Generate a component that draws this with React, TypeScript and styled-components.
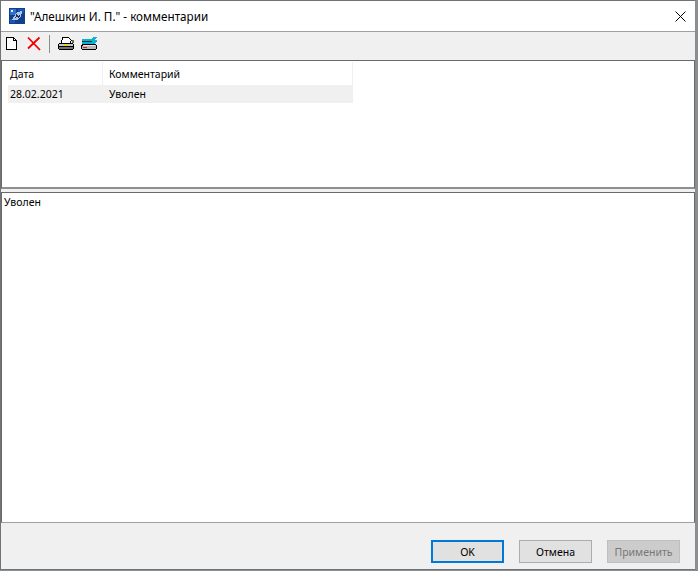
import * as React from "react";
import styled, { createGlobalStyle } from "styled-components";

const GlobalStyle = createGlobalStyle`
	html, body {
		margin: 0;
		padding: 0;
		background: #8a8f94;
	}
	#root {
		width: 698px;
		height: 571px;
		overflow: hidden;
	}
`;

function AppIcon() {
	return (
		<svg width="16" height="16" viewBox="0 0 16 16" shapeRendering="crispEdges">
			<rect width="16" height="16" fill="#12408f" />
			<rect x="1" y="1" width="6" height="6" fill="#2f6fd0" />
			<rect x="9" y="1" width="6" height="4" fill="#1c56b4" />
			<rect x="1" y="11" width="5" height="4" fill="#1c56b4" />
			<path d="M3 12 L7 5 L9 4 L13 3 L12 9 L8 12 Z" fill="#a9c6ec" />
			<path d="M6 10 L8 5 L9 9 L12 5 L10 11 L8 8 Z" fill="#26324f" />
			<rect x="2" y="2" width="2" height="2" fill="#e4eefb" />
		</svg>
	);
}

function NewIcon() {
	return (
		<svg width="16" height="16" viewBox="0 0 16 16" shapeRendering="crispEdges">
			<path d="M2.5 1.5 H9.5 L12.5 4.5 V13.5 H2.5 Z" fill="#fff" stroke="#000" />
			<path d="M9.5 1.5 V4.5 H12.5" fill="none" stroke="#000" />
		</svg>
	);
}

function DeleteIcon() {
	return (
		<svg width="16" height="16" viewBox="0 0 16 16">
			<path d="M2 1.5 L14 14 M13.5 1.5 L2 12.5" stroke="#f00000" strokeWidth="1.8" fill="none" />
		</svg>
	);
}

function PrintIcon() {
	return (
		<svg width="18" height="16" viewBox="0 0 18 16" shapeRendering="crispEdges">
			<path d="M5.5 1.5 H11.5 L14.5 4.5 L12.5 7.5 H4.5 Z" fill="#fff" stroke="#000" />
			<path d="M2.5 7.5 H15.5 L16.5 8.5 V10.5 H1.5 V8.5 Z" fill="#c8c8c8" stroke="#000" />
			<rect x="7" y="8" width="4" height="2" fill="#f0d020" />
			<rect x="15" y="4" width="2" height="3" fill="#666" />
			<path d="M1.5 10.5 H16.5 V12.5 L15.5 13.5 H2.5 L1.5 12.5 Z" fill="#777" stroke="#000" />
		</svg>
	);
}

function SetupIcon() {
	return (
		<svg width="17" height="16" viewBox="0 0 17 16" shapeRendering="crispEdges">
			<path d="M2.5 8.5 H14.5 L15.5 9.5 V12.5 L14.5 13.5 H1.5 L0.5 12.5 V9.5 Z" fill="#b8b8b8" stroke="#000" />
			<rect x="2" y="9" width="12" height="1" fill="#e8e8e8" />
			<rect x="2" y="11" width="4" height="1" fill="#d02020" />
			<rect x="1" y="3" width="10" height="2" fill="#10b0d0" />
			<rect x="1" y="6" width="13" height="2" fill="#10b0d0" />
			<rect x="1" y="5" width="10" height="1" fill="#063a44" />
			<path d="M11 3 L12 1 H16 L14 3 V4 H16 V6 L14 7 H11 Z" fill="#10b0d0" />
		</svg>
	);
}

function CloseIcon() {
	return (
		<svg width="11" height="11" viewBox="0 0 11 11">
			<path d="M0.5 0.5 L10.5 10.5 M10.5 0.5 L0.5 10.5" stroke="#000" strokeWidth="1" fill="none" />
		</svg>
	);
}

export default function App() {
	return (
		<>
			<GlobalStyle />
			<DialogWindow>
				<TitleBar>
					<AppIcon />
					<TitleText>"Алешкин И. П." - комментарии</TitleText>
					<CloseButton>
						<CloseIcon />
					</CloseButton>
				</TitleBar>
				<Toolbar>
					<ToolButton>
						<NewIcon />
					</ToolButton>
					<ToolButton>
						<DeleteIcon />
					</ToolButton>
					<ToolSeparator />
					<ToolButton>
						<PrintIcon />
					</ToolButton>
					<ToolButton>
						<SetupIcon />
					</ToolButton>
				</Toolbar>
				<ListPanel>
					<HeaderRow>
						<DateCell>Дата</DateCell>
						<CommentCell>Комментарий</CommentCell>
					</HeaderRow>
					<ItemRow>
						<DateCell>28.02.2021</DateCell>
						<CommentCell>Уволен</CommentCell>
					</ItemRow>
				</ListPanel>
				<MemoPanel>Уволен</MemoPanel>
				<Footer>
					<DialogButton $primary>OK</DialogButton>
					<DialogButton>Отмена</DialogButton>
					<DialogButton disabled>Применить</DialogButton>
				</Footer>
			</DialogWindow>
		</>
	);
}

const DialogWindow = styled.div`
	width: 696px;
	height: 570px;
	box-sizing: border-box;
	border: 1px solid #6f7478;
	border-right-color: #8c8c8c;
	background: #f0f0f0;
	display: flex;
	flex-direction: column;
	font-family: "Noto Sans", "Liberation Sans", sans-serif;
	font-size: 10.5px;
	color: #000;
`;

const TitleBar = styled.div`
	height: 30px;
	flex: none;
	background: #fff;
	display: flex;
	align-items: center;
	padding-left: 8px;
	gap: 5px;
`;

const TitleText = styled.div`
	flex: 1;
	font-family: "Noto Sans", sans-serif;
	font-size: 11.7px;
	margin-bottom: 1px;
`;

const CloseButton = styled.div`
	width: 30px;
	height: 30px;
	display: flex;
	align-items: center;
	justify-content: center;
`;

const Toolbar = styled.div`
	height: 29px;
	flex: none;
	box-sizing: border-box;
	border-top: 1px solid #a0a0a0;
	padding-top: 1px;
	display: flex;
	align-items: flex-start;
`;

const ToolButton = styled.div`
	width: 22px;
	height: 22px;
	display: flex;
	align-items: center;
	justify-content: center;
	&:last-child {
		margin-left: 1px;
	}
`;

const ToolSeparator = styled.div`
	width: 1px;
	height: 18px;
	background: #8c8c8c;
	margin: 2px 5px 0 4px;
`;

const ListPanel = styled.div`
	height: 129px;
	flex: none;
	box-sizing: border-box;
	background: #fff;
	border: 1px solid #6a6a6a;
	border-bottom: 2px solid #8f8f8f;
	padding: 1px 0 0 6px;
`;

const HeaderRow = styled.div`
	display: flex;
	height: 23px;
	align-items: center;
`;

const ItemRow = styled.div`
	display: flex;
	height: 18px;
	align-items: center;
	background: #f0f0f0;
	width: 345px;
`;

const DateCell = styled.div`
	width: 95px;
	box-sizing: border-box;
	padding-left: 2px;
	height: 100%;
	display: flex;
	align-items: center;
	border-right: 1px solid #f0f0f0;
`;

const CommentCell = styled.div`
	width: 250px;
	box-sizing: border-box;
	padding-left: 6px;
	height: 100%;
	display: flex;
	align-items: center;
	border-right: 1px solid #f0f0f0;
`;

const MemoPanel = styled.div`
	margin-top: 3px;
	height: 331px;
	flex: none;
	box-sizing: border-box;
	background: #fff;
	border: 1px solid #6a6a6a;
	border-bottom-color: #a0a0a0;
	padding: 2px 2px;
`;

const Footer = styled.div`
	flex: 1;
	display: flex;
	justify-content: flex-end;
	align-items: flex-start;
	gap: 15px;
	padding: 17px 15px 0 0;
`;

const DialogButton = styled.button<{ $primary?: boolean }>`
	width: 73px;
	height: 23px;
	padding: 0;
	font-family: "Noto Sans", "Liberation Sans", sans-serif;
	font-size: 10.5px;
	background: #e1e1e1;
	color: #000;
	border: ${(p) => (p.$primary ? "2px solid #0078d7" : "1px solid #adadad")};
	&:disabled {
		background: #cccccc;
		border-color: #bfbfbf;
		color: #787878;
	}
`;
